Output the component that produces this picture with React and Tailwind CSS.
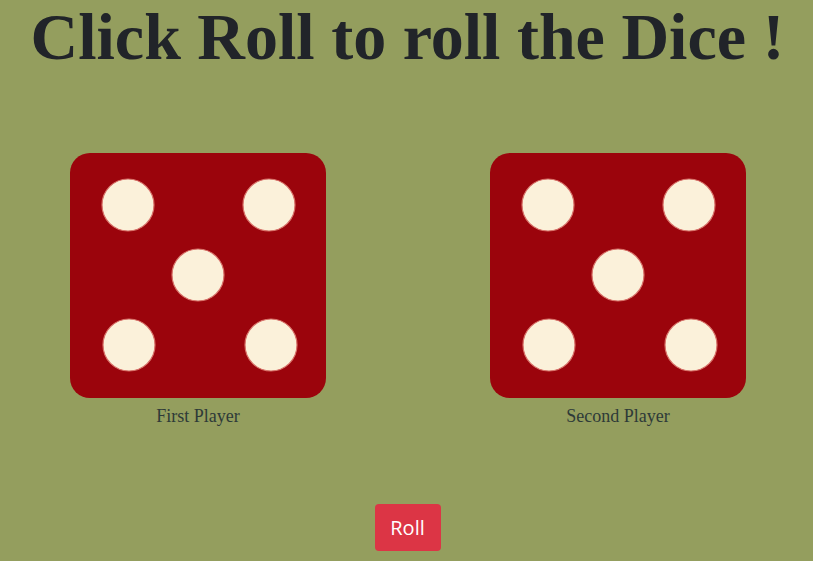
import React from "react";

const PIPS = [
  [58, 52],
  [199, 52],
  [128, 122],
  [59, 192],
  [201, 192],
];

function Die() {
  return (
    <svg width="256" height="245" viewBox="0 0 256 245">
      <rect x="0" y="0" width="256" height="245" rx="20" fill="#9b040c" />
      {PIPS.map(([cx, cy], i) => (
        <circle key={i} cx={cx} cy={cy} r="26" fill="#fbf1da" stroke="#d8736a" strokeWidth="1.2" />
      ))}
    </svg>
  );
}

function Player({ name }) {
  return (
    <div className="flex flex-col items-center">
      <Die />
      <p className="mt-[6px] text-[18px] leading-[24px] text-[#2e3a38] font-['Liberation_Serif',serif]">
        {name}
      </p>
    </div>
  );
}

export default function App() {
  return (
    <div className="w-[813px] h-[561px] bg-[#949e5e] overflow-hidden flex flex-col items-center">
      <h1 className="ml-[2px] text-[66px] leading-[74px] font-bold text-[#212429] font-['Liberation_Serif',serif] whitespace-nowrap">
        Click Roll to roll the Dice !
      </h1>
      <div className="mt-[79px] w-full flex justify-between pl-[70px] pr-[67px]">
        <Player name="First Player" />
        <Player name="Second Player" />
      </div>
      <button className="mt-[76px] ml-[2px] w-[66px] h-[47px] rounded-[4px] bg-[#dc3545] text-white text-[20px] font-['Open_Sans',sans-serif]">
        Roll
      </button>
    </div>
  );
}
